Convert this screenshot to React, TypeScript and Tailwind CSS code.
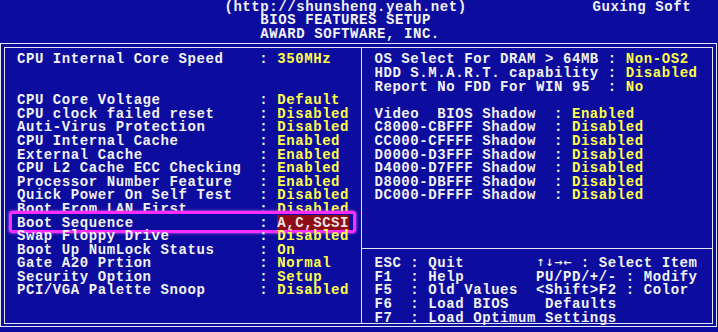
import React from 'react';

const leftItems: [string, string][] = [
  ['CPU Internal Core Speed', '350MHz'],
  ['', ''],
  ['', ''],
  ['CPU Core Voltage', 'Default'],
  ['CPU clock failed reset', 'Disabled'],
  ['Auti-Virus Protection', 'Disabled'],
  ['CPU Internal Cache', 'Enabled'],
  ['External Cache', 'Enabled'],
  ['CPU L2 Cache ECC Checking', 'Enabled'],
  ['Processor Number Feature', 'Enabled'],
  ['Quick Power On Self Test', 'Disabled'],
  ['Boot From LAN First', 'Disabled'],
  ['Boot Sequence', 'A,C,SCSI'],
  ['Swap Floppy Drive', 'Disabled'],
  ['Boot Up NumLock Status', 'On'],
  ['Gate A20 Prtion', 'Normal'],
  ['Security Option', 'Setup'],
  ['PCI/VGA Palette Snoop', 'Disabled'],
];

const osItems: [string, string][] = [
  ['OS Select For DRAM > 64MB', 'Non-OS2'],
  ['HDD S.M.A.R.T. capability', 'Disabled'],
  ['Report No FDD For WIN 95', 'No'],
];

const shadowItems: [string, string][] = [
  ['Video  BIOS Shadow', 'Enabled'],
  ['C8000-CBFFF Shadow', 'Disabled'],
  ['CC000-CFFFF Shadow', 'Disabled'],
  ['D0000-D3FFF Shadow', 'Disabled'],
  ['D4000-D7FFF Shadow', 'Disabled'],
  ['D8000-DBFFF Shadow', 'Disabled'],
  ['DC000-DFFFF Shadow', 'Disabled'],
];

const Row = ({ children, className = '' }: { children?: React.ReactNode; className?: string }) => (
  <div className={`relative h-[13.6px] shrink-0 leading-[16px] whitespace-pre ${className}`}>{children}</div>
);

const Setting = ({ label, value, pad }: { label: string; value: string; pad: number }) => {
  if (!label) return <Row />;
  return (
    <Row>
      {label.padEnd(pad)}
      {': '}
      <span className="text-[#ffff4a]">{value}</span>
    </Row>
  );
};

// arrow keys glyphs, one per text cell
const Arrows = () => (
  <span className="inline-flex align-top">
    {['\u2191', '\u2193', '\u2192', '\u2190'].map((a) => (
      <span key={a} className="inline-block w-[8.975px] text-center font-['DejaVu_Sans',sans-serif] text-[10px] tracking-normal">
        {a}
      </span>
    ))}
  </span>
);

export default function App() {
  return (
    <div className="w-[718px] h-[332px] overflow-hidden bg-[#0c0c9e] text-[#f2f2f2] font-['Liberation_Mono',monospace] font-bold text-[14px] tracking-[0.575px]">
      {/* title lines */}
      <div className="-mt-[1.5px]">
        <Row>{'                         (http://shunsheng.yeah.net)              Guxing Soft'}</Row>
        <Row>{'                             BIOS FEATURES SETUP'}</Row>
        <Row>{'                             AWARD SOFTWARE, INC.'}</Row>
      </div>

      <div className="mt-[4px] w-[716.5px] border-[1.5px] border-[#e6e6ee] p-[2.5px]">
        <div className="flex h-[277px] border-[1.5px] border-[#e6e6ee]">
          {/* left column */}
          <div className="flex w-[357px] shrink-0 flex-col border-r-[1.5px] border-[#e6e6ee] pl-[12.45px] pt-[3.6px]">
            {leftItems.map(([label, value], i) =>
              label === 'Boot Sequence' ? (
                <Row key={i}>
                  {label.padEnd(27)}
                  {': '}
                  <span className="bg-[#8e0c16] text-[#ece4e4]">{value}</span>
                  <span className="pointer-events-none absolute -left-[8px] right-[5px] -top-[3.5px] -bottom-[4.5px] rounded-[3px] border-[3px] border-[#ff2cff] shadow-[0_0_3px_#ff70ff]" />
                </Row>
              ) : (
                <Setting key={i} label={label} value={value} pad={27} />
              )
            )}
          </div>

          {/* right column */}
          <div className="flex flex-1 flex-col pt-[3.6px]">
            <div className="pl-[12.95px]">
              {osItems.map(([label, value], i) => (
                <Setting key={i} label={label} value={value} pad={26} />
              ))}
              <Row />
              {shadowItems.map(([label, value], i) => (
                <Setting key={i} label={label} value={value} pad={20} />
              ))}
              <Row />
              <Row />
              <Row />
            </div>
            <div className="flex h-[13.6px] shrink-0 items-center">
              <div className="h-[1.5px] w-full bg-[#e6e6ee]" />
            </div>
            <div className="pl-[12.95px]">
              <Row>
                {'ESC : Quit        '}
                <Arrows />
                {' : Select Item'}
              </Row>
              <Row>{'F1  : Help        PU/PD/+/- : Modify'}</Row>
              <Row>{'F5  : Old Values  <Shift>F2 : Color'}</Row>
              <Row>{'F6  : Load BIOS    Defaults'}</Row>
              <Row>{'F7  : Load Optimum Settings'}</Row>
            </div>
          </div>
        </div>
      </div>
    </div>
  );
}
